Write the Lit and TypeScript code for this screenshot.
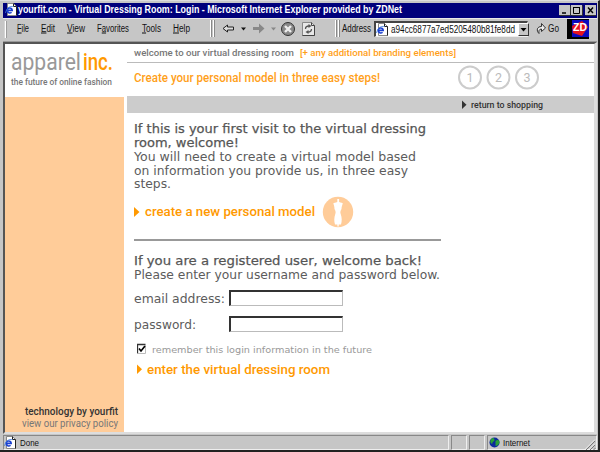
import { LitElement, html, css, svg } from "lit";
import { customElement } from "lit/decorators.js";
import { styleMap } from "lit/directives/style-map.js";

/** One line of text set to an exact measure; `base` is the baseline inside the line box. */
const line = (text: unknown, width: number, size: number, height: number, base: number, cls = "") => html`
  <svg class="line ${cls}" width=${width} height=${height} style=${styleMap({ fontSize: size + "px" })}>
    <text x="0" y=${base} textLength=${width} lengthAdjust="spacingAndGlyphs">${text}</text>
  </svg>`;

const pageIcon = html`<svg class="ico" width="12" height="13" viewBox="0 0 12 13">
  <path d="M2.5.5h6l3 3v9h-9z" fill="#fff" stroke="#888" stroke-width="1"/>
  <path d="M8.500.5v3h3M11.500 3.500v9" fill="none" stroke="#222"/>
  <path d="M2.400 7.400h4.800a2.500 2.500 0 1 0-.7 1.800" fill="none" stroke="#1a3fd0" stroke-width="1.600"/>
  <path d="M.5 10C1.500 5 5 2.700 8.500 3.600" fill="none" stroke="#3f80e0" stroke-width=".8"/></svg>`;

const menus: [string, string, string, number, number][] = [
  ["", "F", "ile", 12, 12], ["", "E", "dit", 14, 12], ["", "V", "iew", 18, 12],
  ["F", "a", "vorites", 32, 12.5], ["", "T", "ools", 19, 12], ["", "H", "elp", 17, 0],
];

@customElement("app-root")
export class AppRoot extends LitElement {
  static styles = css`
    :host { display: block; width: 600px; height: 452px; }
    * { box-sizing: border-box; }
    svg { display: block; flex: none; }
    .line { overflow: visible; fill: #555; font-family: Roboto, sans-serif; white-space: pre; }
    .window { height: 452px; background: #c6c6c6; border-right: 2px solid #222; border-bottom: 2px solid #222;
      border-top: 1px solid #ddd; padding: 2px 1px 0 3px; display: grid; grid-template-rows: 15px 24px 392px 16px; }
    .title { background: #00007b; display: flex; padding-left: 2px; }
    .title .line { fill: #fff; font-weight: 700; margin-left: 1px; }
    .ui { font-family: "Liberation Sans", sans-serif; fill: #111; }
    .u { text-decoration: underline; }
    .btns { display: flex; margin: 2px 1px 0 auto; }
    .bar { display: flex; align-items: flex-start; border-top: 1px solid #e8e8e8; border-bottom: 1px solid #999; }
    .menu { display: flex; padding-left: 10px; }
    .addr { display: flex; gap: 3px; width: 154px; height: 16px; margin: 2px 0 0 3px; background: #fff;
      border: 1px solid #eee; border-top: 2px solid #444; border-left: 2px solid #444; }
    .drop { margin-left: auto; width: 11px; height: 13px; background: #c6c6c6; border: 1px solid #fff;
      border-right-color: #333; border-bottom-color: #333; }
    .view { background: #fff; border: 2px solid #ddd; border-top-color: #555; border-left-color: #555;
      border-right-width: 3px; display: grid; grid-template-columns: 119px 1fr; column-gap: 3px; }
    .side { display: grid; grid-template-rows: 53px 1fr; }
    .logo { padding-left: 6px; }
    .word { display: flex; gap: 2px; }
    .panel { background: #ffcc99; display: flex; flex-direction: column; justify-content: flex-end;
      align-items: flex-end; padding: 0 6px 0 0; }
    .body { font-family: "DejaVu Sans", Verdana, sans-serif; fill: #5c5c5c; }
    .head { fill: #555; stroke: #555; stroke-width: .25px; }
    .gray { fill: #999; } .or { fill: #ff9900; } .dark { fill: #333; } .mid { fill: #777; } .soft { fill: #ff9f1a; }
    .med { font-weight: 500; }
    .main { display: flex; flex-direction: column; }
    .welcome { display: flex; gap: 6px; height: 19px; padding-left: 7px; border-bottom: 1px solid #bbb; }
    .steps { display: flex; height: 33px; padding-left: 7px; }
    .circles { margin-left: 77px; }
    .return { display: flex; height: 17px; margin-bottom: 1px; background: #ccc; padding-left: 335px; gap: 4px; }
    .copy { padding: 8px 0 0 7px; }
    .cta { display: flex; height: 44px; align-items: center; }
    .rule { width: 307px; height: 2px; background: #999; }
    .field { display: flex; height: 26px; }
    .input { width: 114px; height: 16px; border: 1px solid #bbb; border-top: 2px solid #333;
      border-left: 2px solid #333; background: #fff; }
    .check { display: flex; height: 17px; padding-left: 3px; }
    .enter { display: flex; padding-left: 3px; }
    .status { display: flex; gap: 2px; }
    .cell { height: 15px; margin-top: 1px; border: 1px solid #eee; border-top-color: #888; border-left-color: #888;
      display: flex; }
  `;

  private arrow(h: number, cls = "or") {
    return html`<svg class=${cls} width="6" height=${h} viewBox="0 0 6 10"><path d="M0 0L5.500 5L0 10z"/></svg>`;
  }

  private titleBar() {
    return html`<div class="title">${pageIcon}
      ${line("yourfit.com - Virtual Dressing Room: Login - Microsoft Internet Explorer provided by ZDNet", 384, 10, 14, 10, "ui")}
      <svg class="btns" width="37" height="11" viewBox="0 0 37 11">
        ${[0, 12, 26].map((x) => svg`<rect x=${x} width="11" height="10" fill="#c6c6c6"/><path d=${`M${x + 0.5} 10.500h11v-10`} fill="none" stroke="#333"/>`)}
        <path d="M3 8h4" stroke="#000" stroke-width="1.500"/>
        <path d="M14.500 2.500h6v6h-6zM14 2.500h7" fill="none" stroke="#000"/>
        <path d="M29 2.500l5 5.500M34 2.500l-5 5.500" stroke="#000" stroke-width="1.400"/>
      </svg></div>`;
  }

  private toolBar() {
    return html`<div class="bar">
      <svg width="4" height="20" viewBox="0 0 4 20"><path d="M2.500 2v17" stroke="#fff" stroke-width="1.500"/><path d="M3.600 2v17" stroke="#888" stroke-width=".8"/></svg>
      <div class="menu">${menus.map(([a, b, c, w, gap]) => html`${line(svg`${a}<tspan class="u">${b}</tspan>${c}`, w, 10, 20, 12.5, "ui")}
        <svg width=${gap} height="1"></svg>`)}</div>
      <svg width="152" height="22" viewBox="189 19 152 22">
        <path d="M209.500 20v17M212.500 20v17M334.500 20v17M337.500 20v17" stroke="#fff"/>
        <path d="M210.500 20v17M213.500 20v17M335.500 20v17M338.500 20v17" stroke="#888"/>
        <path d="M222 28.500l4.500-3.500v2h6v3h-6v2z" fill="#ddd" stroke="#222"/>
        <path d="M240 27.500h5l-2.500 3z" fill="#111"/>
        <path d="M263.500 28.500l-5.500-5v3.500h-6v3h6v3.500z" fill="#888"/>
        <path d="M270 27.500h5l-2.500 3z" fill="#888"/>
        <circle cx="287" cy="29" r="6.500" fill="#888" stroke="#333"/>
        <path d="M284 26l6 6M290 26l-6 6" stroke="#eee" stroke-width="2.400"/>
        <path d="M301.500 22.500h9l3 3v10h-12z" fill="#e8e8e8" stroke="#888"/>
        <path d="M310.500 22.500v3h3v10h-12" fill="none" stroke="#444"/>
        <path d="M304.500 29c0-2 1.500-3 3.500-3M310.500 29c0 2-1.500 3-3.500 3" fill="none" stroke="#555" stroke-width="1.300"/>
        <path d="M307.500 24v4l3-2zM307.500 30v4l-3-2z" fill="#555"/>
      </svg>
      ${line("Address", 29, 10, 20, 13, "ui")}
      <div class="addr">${pageIcon}${line("a94cc6877a7ed5205480b81fe8dd", 124, 10, 13, 9.5, "ui")}
        <div class="drop"><svg width="9" height="11"><path d="M1.500 4h6l-3 3.500z"/></svg></div></div>
      <svg width="20" height="22" viewBox="528 19 20 22"><path d="M539 33.500c-3-3-2-7 2.500-7v-3l4 4.500-4 3.500v-2.500c-2.500 0-3 2-2.500 4.500z" fill="#eee" stroke="#333"/></svg>
      ${line("Go", 11, 10, 20, 13, "ui")}
      <svg width="30" height="21" viewBox="0 0 30 21"><path d="M8 0h22v20H8z"/><path d="M13 1h17v17H13z" fill="#0a0ac0"/>
        <path d="M13 7l10-5 6 6-6 9-9-3z" fill="#e8131d"/>
        <text x="14" y="11.500" textLength="14" lengthAdjust="spacingAndGlyphs" font-family="Liberation Sans" font-size="10" font-weight="700" fill="#fff">ZD</text></svg>
    </div>`;
  }

  private sidebar() {
    return html`<div class="side"><div class="logo">
        <div class="word">${line("apparel", 70, 23, 31, 26, "gray")}${line("inc.", 30, 23, 31, 26, "or med")}</div>
        ${line("the future of online fashion", 101, 9, 14, 10, "mid med")}</div>
      <div class="panel">${line("technology by yourfit", 93, 10, 12, 9.500, "dark med")}${line("view our privacy policy", 96, 10, 12, 9.5, "mid")}
      <svg width="1" height="3"></svg></div></div>`;
  }

  private main() {
    return html`<div class="main">
      <div class="welcome">${line("welcome to our virtual dressing room", 160, 9.5, 15, 11.500, "mid med")}${line("[+ any additional branding elements]", 156, 9.5, 15, 11.500, "soft med")}</div>
      <div class="steps">${line("Create your personal model in three easy steps!", 246, 12, 30, 18.5, "soft med")}
        <svg class="circles" width="84" height="33" viewBox="457 63 84 33">
          ${[470, 498.5, 527].map((x, i) => svg`<circle cx=${x} cy="77.500" r="11" fill="none" stroke="#ccc" stroke-width="2"/>
            <text x=${x} y="82" text-anchor="middle" font-family="Roboto" font-size="12.500" fill="#bbb">${i + 1}</text>`)}
        </svg></div>
      <div class="return"><svg class="dark" width="5" height="17"><path d="M0 4.500l4.500 4.200l-4.500 4.200z"/></svg>${line("return to shopping", 72, 9.5, 17, 12, "dark med")}</div>
      <div class="copy">
        ${line("If this is your first visit to the virtual dressing", 292, 13, 14, 11, "body head")}
        ${line("room, welcome!", 105, 13, 14, 11, "body head")}
        ${line("You will need to create a virtual model based", 282, 13, 14, 11, "body")}
        ${line("on information you provide us, in three easy", 274, 13, 14, 11, "body")}
        ${line("steps.", 37, 13, 12, 10, "body")}
        <div class="cta">${this.arrow(10)}<svg width="5" height="1"></svg>${line("create a new personal model", 170, 12.5, 20, 14, "or med")}
          <svg width="46" height="32" viewBox="315 196 46 32"><circle cx="338" cy="212" r="15.200" fill="#ffcc99"/>
            <path d="M337.300 199h1.800v3c2 .8 3.300.8 3.700 1.500c-.8 2-1.300 4-1.300 5.500c-1 2-1.500 3-.8 5c1.300 4 1.300 7 .3 10.500h-2.300v2h-1.300v-2h-2.400c-1-3.500-1-6.500.3-10.500c.7-2 .2-3-.8-5c0-1.500-.3-3.500-1.200-5.500c.8-.8 2-.7 4-1.500z" fill="#fff"/></svg></div>
        <svg width="1" height="5"></svg><div class="rule"></div>
        <svg width="1" height="13"></svg>
        ${line("If you are a registered user, welcome back!", 288, 13, 14, 11, "body head")}
        ${line("Please enter your username and password below.", 306, 13, 22, 11, "body")}
        <div class="field">${line("email address:", 91, 13, 16, 13, "body")}<svg width="4" height="1"></svg><div class="input"></div></div>
        <div class="field">${line("password:", 62, 13, 16, 13, "body")}<svg width="33" height="1"></svg><div class="input"></div></div>
        <div class="check"><svg width="15" height="16"><path d="M.5 11.500v-9h8" fill="none" stroke="#333" stroke-width="1.300"/><path d="M8.500 3v8.500h-8" fill="none" stroke="#bbb"/><path d="M2 6.500l2 2.500 4-5" fill="none" stroke="#000" stroke-width="1.700"/></svg>
          ${line("remember this login information in the future", 220, 9.5, 16, 11, "body gray")}</div>
        <div class="enter"><svg class="or" width="10" height="20"><path d="M0 5.500l5 4.700-5 4.700z"/></svg>${line("enter the virtual dressing room", 183, 12.5, 20, 14.5, "or med")}</div>
      </div></div>`;
  }

  render() {
    return html`<div class="window">${this.titleBar()}${this.toolBar()}
      <div class="view">${this.sidebar()}${this.main()}</div>
      <div class="status">
        <div class="cell" style=${styleMap({ width: "446px" })}>${pageIcon}<svg width="4" height="1"></svg>${line("Done", 19, 9.5, 13, 9.500, "ui")}</div>
        <div class="cell" style=${styleMap({ width: "16px" })}></div><div class="cell" style=${styleMap({ width: "16px" })}></div>
        <div class="cell" style=${styleMap({ width: "110px" })}>
          <svg width="15" height="13"><circle cx="6.500" cy="6.500" r="5" fill="#0b2a9c"/><path d="M2.500 4c2-3 4-2 4 0s-2 1-2 3-3 0-2-3zM7.500 5c2-2 4-1 4 1s-2 4-4 4z" fill="#28a038"/></svg>
          ${line("Internet", 27, 9.5, 13, 9.500, "ui")}
          <svg width="66" height="14"><path d="M56 14l9-9M60 14l5-5M63.500 14l2-2" stroke="#777"/><path d="M55 13.500l10-10M59 13.500l6-6" stroke="#fff" stroke-width=".7"/></svg></div>
      </div></div>`;
  }
}
